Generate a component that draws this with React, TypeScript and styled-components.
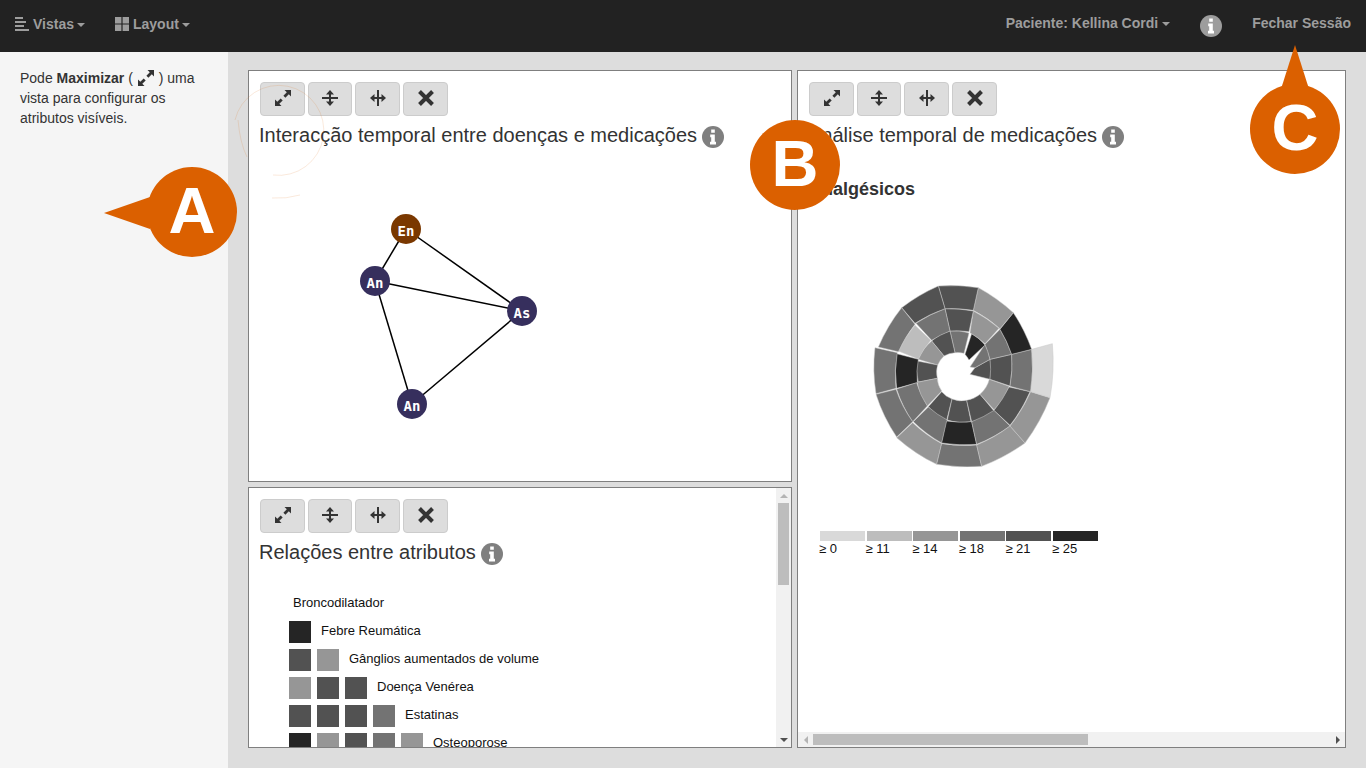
import React from 'react';
import styled, { createGlobalStyle } from 'styled-components';

const GlobalStyle = createGlobalStyle`
    html, body {
        margin: 0;
        height: 100%;
        overflow: hidden;
        font-family: "Liberation Sans", Arial, sans-serif;
        font-size: 14px;
        line-height: 20px;
        color: #333;
    }
`

const GREYS = { g1: '#d9d9d9', g2: '#bdbdbd', g3: '#969696', g4: '#737373', g5: '#525252', g6: '#252525' };

const attributes = [
    { label: 'Broncodilatador', cells: [] as string[] },
    { label: 'Febre Reumática', cells: [GREYS.g6] },
    { label: 'Gânglios aumentados de volume', cells: [GREYS.g5, GREYS.g3] },
    { label: 'Doença Venérea', cells: [GREYS.g3, GREYS.g5, GREYS.g5] },
    { label: 'Estatinas', cells: [GREYS.g5, GREYS.g5, GREYS.g5, GREYS.g4] },
    { label: 'Osteoporose', cells: [GREYS.g6, GREYS.g3, GREYS.g5, GREYS.g4, GREYS.g3] },
];

const legend = [
    { label: '≥ 0', color: GREYS.g1 },
    { label: '≥ 11', color: GREYS.g2 },
    { label: '≥ 14', color: GREYS.g3 },
    { label: '≥ 18', color: GREYS.g4 },
    { label: '≥ 21', color: GREYS.g5 },
    { label: '≥ 25', color: GREYS.g6 },
];

// spiral segments, from the centre outwards, counter-clockwise
const spiral: [string, string][] = [
    ['330,310 345,290 390,265 390,325', GREYS.g5],
    ['330,288 375,220 390,265 345,290', GREYS.g4],
    ['315,250 335,188 375,222 327,267', GREYS.g6],
    ['270,180 327,186 312,247 285,245', GREYS.g4],
    ['215,210 270,180 285,245 252,255', GREYS.g5],
    ['175,265 215,210 252,255 233,282', GREYS.g3],
    ['172,270 233,282 232,322 175,333', GREYS.g5],
    ['172,334 232,322 245,360 202,405', GREYS.g3],
    ['205,407 245,362 276,384 260,447', GREYS.g5],
    ['262,447 276,384 320,388 333,452', GREYS.g5],
    ['335,452 320,388 360,370 402,420', GREYS.g5],
    ['402,416 360,370 388,325 447,346', GREYS.g3],
    ['390,265 455,250 450,345 390,325', GREYS.g5],
    ['375,220 420,175 455,250 390,265', GREYS.g4],
    ['340,120 417,172 375,218 330,185', GREYS.g3],
    ['255,113 340,120 327,182 270,180', GREYS.g5],
    ['168,157 255,113 270,180 215,208', GREYS.g4],
    ['115,240 165,163 212,208 175,264', GREYS.g2],
    ['110,248 175,265 172,335 110,352', GREYS.g6],
    ['110,354 170,335 202,405 158,452', GREYS.g4],
    ['160,452 205,408 262,447 245,516', GREYS.g4],
    ['260,450 335,452 350,520 245,516', GREYS.g6],
    ['335,452 402,418 450,465 350,520', GREYS.g4],
    ['402,418 447,348 510,362 450,463', GREYS.g5],
    ['450,346 455,250 515,235 512,362', GREYS.g4],
    ['420,175 460,125 515,235 455,250', GREYS.g6],
    ['355,50 460,125 420,173 340,118', GREYS.g3],
    ['235,45 355,50 340,118 255,113', GREYS.g5],
    ['125,110 235,45 255,113 165,157', GREYS.g5],
    ['55,228 125,110 165,160 115,242', GREYS.g4],
    ['48,368 45,230 112,245 108,352', GREYS.g4],
    ['110,498 48,370 108,355 158,452', GREYS.g4],
    ['230,580 110,500 158,455 245,518', GREYS.g3],
    ['230,580 245,518 350,522 365,586', GREYS.g4],
    ['365,586 350,522 450,465 495,516', GREYS.g3],
    ['495,516 450,465 512,362 570,380', GREYS.g3],
    ['570,380 512,362 515,235 577,218', GREYS.g1],
];

// edges running around the centre are bent, spokes stay straight.
// the innermost turn is bent fully so that the hole comes out round
const segmentPath = (points: string, index: number) => {
    const inner = index < 12;
    const cx = inner ? 300 : 285, cy = 315;
    const bend = inner ? 2 : 1;
    const pts = points.split(' ').map(p => p.split(',').map(Number));
    let d = `M${pts[0][0]} ${pts[0][1]}`;
    pts.forEach((a, i) => {
        const b = pts[(i + 1) % pts.length];
        const ra = Math.hypot(a[0] - cx, a[1] - cy);
        const rb = Math.hypot(b[0] - cx, b[1] - cy);
        const mx = (a[0] + b[0]) / 2, my = (a[1] + b[1]) / 2;
        const rm = Math.hypot(mx - cx, my - cy);
        const len = Math.hypot(b[0] - a[0], b[1] - a[1]);
        if (Math.abs(ra - rb) < len * 0.6) {
            const k = ((ra + rb) / 2 - rm) * bend / rm;
            d += `Q${mx + (mx - cx) * k} ${my + (my - cy) * k} ${b[0]} ${b[1]}`;
        } else {
            d += `L${b[0]} ${b[1]}`;
        }
    });
    return d + 'Z';
};

const graphNodes = [
    { x: 66, y: 29, label: 'En', color: '#7a3800' },
    { x: 35, y: 81, label: 'An', color: '#362f5d' },
    { x: 182, y: 111, label: 'As', color: '#362f5d' },
    { x: 72, y: 204, label: 'An', color: '#362f5d' },
];
const graphEdges = [[0, 1], [0, 2], [1, 2], [1, 3], [2, 3]];

const ExpandIcon = () => (
    <svg width="16" height="16" viewBox="0 0 16 16" fill="#333">
        <path d="M9.5 0H16v6.5l-2.2-2.2-3.4 3.4-2-2 3.4-3.4z" />
        <path d="M0 9.5V16h6.5l-2.2-2.2 3.4-3.4-2-2-3.4 3.4z" />
    </svg>
);
const SplitRowIcon = () => (
    <svg width="16" height="16" viewBox="0 0 16 16" fill="#333">
        <path d="M0 7h16v2H0zM7 3h2v10H7z" />
        <path d="M8 0l4 4.5H4zM8 16l-4-4.5h8z" />
    </svg>
);
const SplitColIcon = () => (
    <svg width="16" height="16" viewBox="0 0 16 16" fill="#333">
        <path d="M7 0h2v16H7zM3 7h10v2H3z" />
        <path d="M0 8l4.5-4v8zM16 8l-4.5 4V4z" />
    </svg>
);
const CloseIcon = () => (
    <svg width="16" height="16" viewBox="0 0 16 16">
        <path d="M1.5 1.5l13 13M14.5 1.5l-13 13" stroke="#333" strokeWidth="4" />
    </svg>
);
const ListIcon = () => (
    <svg width="14" height="14" viewBox="0 0 14 14" fill="#9d9d9d">
        <path d="M0 0h8v2H0zM0 4h11v2H0zM0 8h9v2H0zM0 12h14v2H0z" />
    </svg>
);
const GridIcon = () => (
    <svg width="14" height="14" viewBox="0 0 14 14" fill="#9d9d9d">
        <path d="M0 0h6.4v6.4H0zM7.6 0H14v6.4H7.6zM0 7.6h6.4V14H0zM7.6 7.6H14V14H7.6z" />
    </svg>
);
const InfoIcon = ({ color = '#7f7f7f' }: { color?: string }) => (
    <svg width="22" height="22" viewBox="0 0 22 22">
        <circle cx="11" cy="11" r="11" fill={color} />
        <path fill="#fff" d="M9.2 3.6h3.6v3.2H9.2zM8.2 8.6h4.6v7.2h1.2v2.6H8v-2.6h1.2v-4.6h-1z" />
    </svg>
);

const ViewToolbar = () => (
    <Toolbar>
        <ToolButton $width={45}><ExpandIcon /></ToolButton>
        <ToolButton $width={44}><SplitRowIcon /></ToolButton>
        <ToolButton $width={45}><SplitColIcon /></ToolButton>
        <ToolButton $width={45}><CloseIcon /></ToolButton>
    </Toolbar>
);

export default function App() {
    return (
        <>
            <GlobalStyle />
            <Navbar>
                <NavGroup>
                    <NavItem><ListIcon /><span>Vistas</span><Caret /></NavItem>
                    <NavItem><GridIcon /><span>Layout</span><Caret /></NavItem>
                </NavGroup>
                <NavGroup>
                    <NavItem $plain><span>Paciente: Kellina Cordi</span><Caret /></NavItem>
                    <NavInfo><InfoIcon color="#9d9d9d" /></NavInfo>
                    <NavItem $plain>Fechar Sessão</NavItem>
                </NavGroup>
            </Navbar>
            <Page>
                <Sidebar>
                    Pode <b>Maximizar</b> ( <InlineIcon><ExpandIcon /></InlineIcon> ) uma vista para configurar os atributos visíveis.
                </Sidebar>
                <Main>
                    <TopPanel>
                        <ViewToolbar />
                        <Title>Interacção temporal entre doenças e medicações <InfoIcon /></Title>
                        <GraphSvg width="220" height="230" viewBox="0 0 220 230">
                            {graphEdges.map(([a, b], i) => (
                                <line key={i} x1={graphNodes[a].x} y1={graphNodes[a].y} x2={graphNodes[b].x} y2={graphNodes[b].y} stroke="#000" strokeWidth="1.5" />
                            ))}
                            {graphNodes.map((n, i) => (
                                <g key={i}>
                                    <circle cx={n.x} cy={n.y} r="15" fill={n.color} />
                                    <NodeLabel x={n.x} y={n.y + 7} textAnchor="middle">{n.label}</NodeLabel>
                                </g>
                            ))}
                        </GraphSvg>
                    </TopPanel>
                    <SidePanel>
                        <PanelBody>
                            <ViewToolbar />
                            <Title>Análise temporal de medicações <InfoIcon /></Title>
                            <ChartHeading>Analgésicos</ChartHeading>
                            <SpiralSvg width="210" height="210" viewBox="0 0 630 630">
                                {spiral.map(([points, fill], i) => (
                                    <path key={i} d={segmentPath(points, i)} fill={fill} stroke="#c8c8c8" strokeWidth="1.5" strokeLinejoin="round" />
                                ))}
                            </SpiralSvg>
                            <Legend>
                                {legend.map(l => <LegendBar key={l.label} $color={l.color} />)}
                                {legend.map(l => <LegendLabel key={l.label}>{l.label}</LegendLabel>)}
                            </Legend>
                        </PanelBody>
                        <HScroll>
                            <ArrowLeft />
                            <HTrack><HThumb /></HTrack>
                            <ArrowRight />
                        </HScroll>
                    </SidePanel>
                    <BottomPanel>
                        <PanelBody>
                            <ViewToolbar />
                            <Title>Relações entre atributos <InfoIcon /></Title>
                            <Matrix>
                                {attributes.map(a => (
                                    <MatrixRow key={a.label}>
                                        {a.cells.map((c, i) => <MatrixCell key={i} $color={c} />)}
                                        <MatrixLabel>{a.label}</MatrixLabel>
                                    </MatrixRow>
                                ))}
                            </Matrix>
                        </PanelBody>
                        <VScroll>
                            <ArrowUp />
                            <VTrack><VThumb /></VTrack>
                            <ArrowDown />
                        </VScroll>
                    </BottomPanel>
                </Main>
            </Page>
            <Halo width="110" height="130" viewBox="0 0 110 130">
                <path d="M39 92A45 45 0 1 0 1 37" />
                <path d="M4 37Q6 60 13 74" />
                <path d="M38 115Q52 116 66 112" />
            </Halo>
            <Bubble $left={147} $top={167}><TailLeft />A</Bubble>
            <Bubble $left={750} $top={120}>B</Bubble>
            <Bubble $left={1250} $top={84}><TailUp />C</Bubble>
        </>
    );
}

const Navbar = styled.nav`
    display: flex;
    justify-content: space-between;
    height: 52px;
    background-color: #222;
    color: #9d9d9d;
    font-weight: 700;
`
const NavGroup = styled.div`
    display: flex;
    align-items: flex-start;
`
const NavItem = styled.a<{ $plain?: boolean }>`
    display: flex;
    align-items: center;
    height: 20px;
    gap: 4px;
    padding: ${p => (p.$plain ? '13px 15px' : '14px 15px')};
    i { margin-left: ${p => (p.$plain ? '0' : '-1px')}; }
`
const NavInfo = styled.span`
    display: flex;
    padding: 15px 15px;
`
const Caret = styled.i`
    display: inline-block;
    border-top: 4px solid currentColor;
    border-left: 4px solid transparent;
    border-right: 4px solid transparent;
    margin-top: 1px;
`
const Page = styled.div`
    display: flex;
    height: 716px;
`
const Sidebar = styled.aside`
    box-sizing: border-box;
    width: 228px;
    padding: 16px 20px;
    background-color: #f5f5f5;
`
const InlineIcon = styled.span`
    display: inline-block;
    width: 16px;
    height: 16px;
    margin: 0 1px;
    vertical-align: -3px;
    line-height: 0;
`
const Main = styled.main`
    flex: 1;
    display: grid;
    grid-template-columns: 544px 549px;
    grid-template-rows: 412px 261px;
    gap: 5px;
    padding: 18px 20px 20px;
    background-color: #ddd;
`
const Panel = styled.section`
    box-sizing: border-box;
    display: flex;
    min-height: 0;
    background-color: #fff;
    border: 1px solid #7f7f7f;
`
const TopPanel = styled(Panel)`
    flex-direction: column;
    padding: 11px;
    overflow: hidden;
`
const SidePanel = styled(Panel)`
    grid-column: 2;
    grid-row: 1 / span 2;
    flex-direction: column;
`
const BottomPanel = styled(Panel)`
    flex-direction: row;
`
const PanelBody = styled.div`
    flex: 1;
    min-width: 0;
    min-height: 0;
    padding: 11px;
    overflow: hidden;
`
const Toolbar = styled.div`
    display: flex;
    gap: 3px;
`
const ToolButton = styled.button<{ $width: number }>`
    box-sizing: border-box;
    display: flex;
    align-items: center;
    justify-content: center;
    width: ${p => p.$width}px;
    height: 34px;
    padding: 0 0 2px;
    background-color: #ddd;
    border: 1px solid #ccc;
    border-radius: 4px;
`
const Title = styled.h3`
    display: flex;
    align-items: center;
    gap: 5px;
    margin: 7px 0 0 -1px;
    height: 24px;
    font-size: 20px;
    font-weight: 400;
    line-height: 24px;
    color: #333;
    svg { margin-top: 3px; }
`
const GraphSvg = styled.svg`
    display: block;
    flex: none;
    margin: 53px 0 0 80px;
`
const NodeLabel = styled.text`
    font-family: "DejaVu Sans Mono", monospace;
    font-size: 14px;
    font-weight: 700;
    fill: #fff;
`
const ChartHeading = styled.h4`
    margin: 31px 0 0;
    font-size: 18px;
    line-height: 22px;
    color: #333;
`
const SpiralSvg = styled.svg`
    display: block;
    margin: 71px 0 0 51px;
`
const Legend = styled.div`
    display: grid;
    grid-template-columns: repeat(6, 45px);
    column-gap: 1.6px;
    margin: 50px 0 0 11px;
    color: #111;
    font-size: 13px;
`
const LegendBar = styled.div<{ $color: string }>`
    height: 10px;
    background-color: ${p => p.$color};
`
const LegendLabel = styled.span`
    margin-left: -1px;
    line-height: 16px;
`
const Matrix = styled.div`
    display: flex;
    flex-direction: column;
    gap: 6px;
    margin: 29px 0 0 29px;
`
const MatrixRow = styled.div`
    display: flex;
    flex: none;
    align-items: center;
    height: 22px;
    gap: 6px;
`
const MatrixCell = styled.span<{ $color: string }>`
    width: 22px;
    height: 22px;
    background-color: ${p => p.$color};
`
const MatrixLabel = styled.span`
    margin: 0 0 2px 4px;
    font-size: 13px;
    color: #111;
`
// the screenshot browser hides native scrollbars, so they are built here
const VScroll = styled.div`
    flex: none;
    display: flex;
    flex-direction: column;
    align-items: center;
    width: 15px;
    background-color: #f1f1f1;
`
const HScroll = styled.div`
    flex: none;
    display: flex;
    align-items: center;
    height: 15px;
    background-color: #f1f1f1;
`
const VTrack = styled.div`
    flex: 1;
    width: 11px;
`
const HTrack = styled.div`
    flex: 1;
    height: 11px;
`
const VThumb = styled.div`
    height: 82px;
    background-color: #bdbdbd;
`
const HThumb = styled.div`
    width: 275px;
    height: 100%;
    background-color: #bdbdbd;
`
const ArrowBox = styled.span`
    flex: none;
    width: 15px;
    height: 15px;
    display: flex;
    align-items: center;
    justify-content: center;
    &::after {
        content: '';
        border-style: solid;
        border-color: transparent;
    }
`
const ArrowUp = styled(ArrowBox)`
    &::after {
        border-width: 0 4px 4px;
        border-bottom-color: #b4b4b4;
    }
`
const ArrowDown = styled(ArrowBox)`
    &::after {
        border-width: 4px 4px 0;
        border-top-color: #505050;
    }
`
const ArrowLeft = styled(ArrowBox)`
    &::after {
        border-width: 4px 4px 4px 0;
        border-right-color: #b4b4b4;
    }
`
const ArrowRight = styled(ArrowBox)`
    &::after {
        border-width: 4px 0 4px 4px;
        border-left-color: #505050;
    }
`
const Bubble = styled.div<{ $left: number; $top: number }>`
    box-sizing: border-box;
    position: absolute;
    left: ${p => p.$left}px;
    top: ${p => p.$top}px;
    display: flex;
    align-items: center;
    justify-content: center;
    width: 90px;
    height: 90px;
    padding-bottom: 4px;
    border-radius: 50%;
    background-color: #db6000;
    color: #fff;
    font-size: 65px;
    font-weight: 700;
    line-height: 1;
`
const TailLeft = styled.span`
    position: absolute;
    left: -43px;
    top: 30px;
    border-right: 46px solid #db6000;
    border-top: 16px solid transparent;
    border-bottom: 16px solid transparent;
`
const TailUp = styled.span`
    position: absolute;
    left: 31px;
    top: -39px;
    border-bottom: 44px solid #db6000;
    border-left: 14px solid transparent;
    border-right: 14px solid transparent;
`
const Halo = styled.svg`
    position: absolute;
    left: 234px;
    top: 83px;
    fill: none;
    stroke: rgba(219, 96, 0, 0.14);
    stroke-width: 1;
    pointer-events: none;
`
